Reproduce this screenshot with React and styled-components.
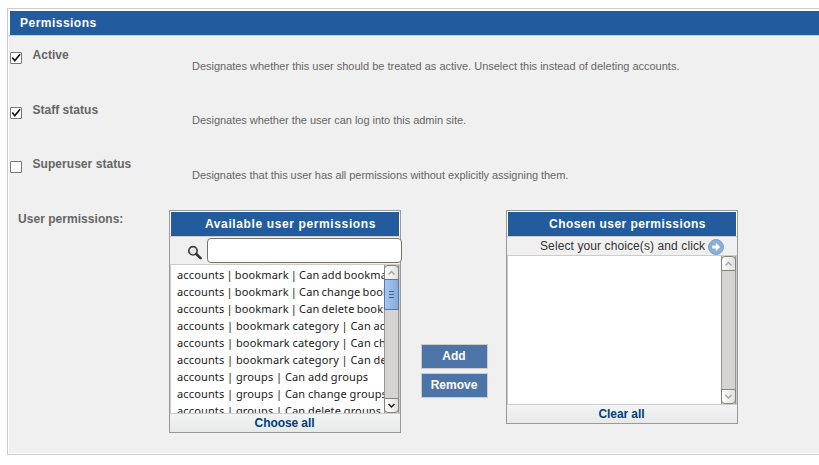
import React from "react";
import styled, { createGlobalStyle, css } from "styled-components";

const GlobalStyle = createGlobalStyle`
  * { box-sizing: border-box; }
  body {
    margin: 0;
    background: #fff;
    color: #666;
    font-family: "Liberation Sans", Arial, sans-serif;
    font-size: 12px;
    overflow: hidden;
  }
`;

const Page = styled.main`
  width: 819px;
  height: 465px;
  padding: 8px 0 0 7px;
  overflow: hidden;
`;

const Fieldset = styled.section`
  height: 447px;
  border: 1px solid #ccc;
  border-right: 0;
  padding: 1px 0 1px 1px;
  background: #fff;
`;

const FieldsetBody = styled.div`
  height: 443px;
  background: #f0f0f0;
`;

const blueBar = css`
  background: #225c9f;
  border: solid #fff;
  border-width: 1px 1px 0;
  color: #fff;
  font-weight: bold;
  white-space: nowrap;
`;

const FieldsetTitle = styled.h2`
  ${blueBar}
  height: 25px;
  margin: 0 0 1px;
  padding-left: 10px;
  border-right: 0;
  font-size: 12px;
  line-height: 25px;
  letter-spacing: 0.48px;
  box-shadow: 0 1px #ccc;
`;

const CheckRow = styled.div`
  display: grid;
  grid-template-columns: 23.5px 159.5px 1fr;
  height: ${(p) => p.$height}px;
  padding-top: ${(p) => p.$pad}px;
`;

const CheckBox = styled.span`
  display: block;
  width: 12px;
  height: 12px;
  margin: 4px 0 0 1px;
  border: 1px solid #7b776f;
  border-radius: 1px;
  background: #fff;
  svg { display: block; width: 10px; height: 10px; }
`;

const Label = styled.label`
  font-size: 12px;
  line-height: 14px;
  font-weight: bold;
  letter-spacing: ${(p) => p.$spacing}px;
  white-space: nowrap;
`;

const Help = styled.p`
  margin: ${(p) => p.$top}px 0 0;
  font-size: 11px;
  line-height: 13px;
  letter-spacing: ${(p) => p.$spacing}px;
  white-space: nowrap;
`;

const PermissionsRow = styled.div`
  display: grid;
  grid-template-columns: 151px 232px 105px 232px;
  padding: 11px 0 0 9px;
  align-items: start;
  & > label { padding-top: 2px; }
`;

const Selector = styled.div`
  width: 232px;
  border: 1px solid #999;
  background: #f0f0f0;
`;

const SelectorTitle = styled.h3`
  ${blueBar}
  height: 25px;
  margin: 0;
  padding-left: 11px;
  line-height: 25px;
  font-size: 12px;
  text-align: center;
  letter-spacing: ${(p) => p.$spacing}px;
`;

const ToolRow = styled.div`
  display: flex;
  height: ${(p) => p.$height}px;
  border: solid #ccc;
  border-width: 1px 0;
  background: #f0f0f0;
`;

const FilterField = styled.div`
  flex: none;
  width: 195px;
  height: 25px;
  margin: 1px 0 0 4px;
  border: 1px solid #77736b;
  border-radius: 4px;
  background: #fff;
  position: relative;
`;

const SearchIcon = styled.svg`
  flex: none;
  width: 16px;
  height: 16px;
  margin: 8px 0 0 17px;
`;

const Hint = styled.span`
  margin-left: 33px;
  color: #333;
  font-size: 12px;
  line-height: 18px;
  letter-spacing: 0.1px;
  white-space: pre;
`;

const ArrowIcon = styled.svg`
  flex: none;
  width: 16px;
  height: 16px;
  margin: 2px 0 0 3px;
`;

const ListBox = styled.div`
  display: flex;
  height: 148px;
  border: solid #ccc;
  border-width: 0 1px;
  background: #fff;
  overflow: hidden;
`;

const Options = styled.ul`
  flex: 1;
  min-width: 0;
  margin: 0;
  padding: 1px 0 0 6px;
  list-style: none;
  overflow: hidden;
`;

const Option = styled.li`
  height: 17px;
  color: #1a1a1a;
  font-family: "Noto Sans", "Open Sans", sans-serif;
  font-size: 11px;
  line-height: 17px;
  letter-spacing: 0.14px;
  word-spacing: ${(p) => p.$wordSpacing}px;
  white-space: nowrap;
`;

const ScrollTrack = styled.div`
  display: flex;
  flex-direction: column;
  flex: none;
  width: 15px;
  border: solid #999490;
  border-width: 0 1px;
  background: #d5d4d2;
`;

const ScrollButton = styled.div`
  flex: none;
  width: 15px;
  height: 15px;
  margin: 0 -1px;
  border: 1px solid #87837d;
  border-radius: ${(p) => (p.$end ? "0 0 4px 4px" : "4px 4px 0 0")};
  background: linear-gradient(90deg, #fff, #e0dfdd);
  color: ${(p) => (p.$active ? "#222" : "#aaa7a1")};
  margin-top: ${(p) => (p.$end ? "auto" : 0)};
  svg { display: block; width: 13px; height: 13px; }
`;

const Thumb = styled.div`
  display: flex;
  flex-direction: column;
  align-items: center;
  justify-content: center;
  gap: 2px;
  height: 31px;
  margin: -1px -1px 0;
  border: 1px solid #5079b1;
  background: linear-gradient(90deg, #a9c6ed, #85abdc);
  span { width: 5px; height: 1px; background: #3c659c; }
`;

const SelectorFooter = styled.div`
  height: 19px;
  padding-right: 1px;
  border-top: 1px solid #ccc;
  background: linear-gradient(#f3f4f4, #e7e9e8);
  color: #003f7d;
  font-weight: bold;
  line-height: 18px;
  text-align: center;
  letter-spacing: -0.08px;
`;

const Actions = styled.div`
  display: flex;
  flex-direction: column;
  gap: 4px;
  padding: 134px 18px 0 20px;
`;

const ActionButton = styled.button`
  width: 67px;
  height: 25px;
  padding: 0 1px 1px 0;
  border: 1px solid #ccc;
  background: #4c74a9;
  color: #fff;
  font: bold 12px/14px "Liberation Sans", Arial, sans-serif;
  letter-spacing: ${(p) => p.$spacing}px;
`;

const checks = [
  { label: "Active", spacing: 0.02, help: "Designates whether this user should be treated as active. Unselect this instead of deleting accounts.", helpSpacing: -0.005, checked: true, height: 54, pad: 12, helpTop: 12 },
  { label: "Staff status", spacing: 0.02, help: "Designates whether the user can log into this admin site.", helpSpacing: -0.03, checked: true, height: 55, pad: 13, helpTop: 11 },
  { label: "Superuser status", spacing: 0.05, help: "Designates that this user has all permissions without explicitly assigning them.", helpSpacing: -0.05, checked: false, height: 54, pad: 12, helpTop: 12 },
];

const options = [
  { name: "accounts | bookmark | Can add bookmark", gap: -0.9 },
  { name: "accounts | bookmark | Can change bookmark", gap: -0.9 },
  { name: "accounts | bookmark | Can delete bookmark", gap: -0.9 },
  { name: "accounts | bookmark category | Can add bookmark category", gap: -0.3 },
  { name: "accounts | bookmark category | Can change bookmark category", gap: -0.3 },
  { name: "accounts | bookmark category | Can delete bookmark category", gap: -0.3 },
  { name: "accounts | groups | Can add groups", gap: -0.3 },
  { name: "accounts | groups | Can change groups", gap: -0.3 },
  { name: "accounts | groups | Can delete groups", gap: -0.3 },
];

function Chevron({ down }) {
  return (
    <svg viewBox="0 0 13 13">
      <path d={down ? "M3.5 5 6.5 8 9.5 5" : "M3.5 8.5 6.5 5.5 9.5 8.5"} fill="none" stroke="currentColor" strokeWidth={1.5} />
    </svg>
  );
}

function ScrollBar({ scrollable }) {
  return (
    <ScrollTrack>
      <ScrollButton><Chevron /></ScrollButton>
      {scrollable && <Thumb><span /><span /><span /></Thumb>}
      <ScrollButton $end $active={scrollable}><Chevron down /></ScrollButton>
    </ScrollTrack>
  );
}

export default function App() {
  return (
    <Page>
      <GlobalStyle />
      <Fieldset>
        <FieldsetBody>
          <FieldsetTitle>Permissions</FieldsetTitle>
          {checks.map((c) => (
            <CheckRow key={c.label} $height={c.height} $pad={c.pad}>
              <CheckBox role="checkbox" aria-checked={c.checked}>
                {c.checked && (
                  <svg viewBox="0 0 10 10">
                    <path d="M1.3 4.5 3.8 7.7 9 1.2" fill="none" stroke="#111" strokeWidth="1.7" />
                  </svg>
                )}
              </CheckBox>
              <Label $spacing={c.spacing}>{c.label}</Label>
              <Help $top={c.helpTop} $spacing={c.helpSpacing}>{c.help}</Help>
            </CheckRow>
          ))}
          <PermissionsRow>
            <Label $spacing={0.04}>User permissions:</Label>
            <Selector>
              <SelectorTitle $spacing={0.62}>Available user permissions</SelectorTitle>
              <ToolRow $height={29}>
                <SearchIcon viewBox="0 0 16 16">
                  <circle cx="6" cy="5.8" r="4.2" fill="#e5e5e5" stroke="#444" strokeWidth="1.7" />
                  <path d="M3.8 5.5A2.4 2.4 0 0 1 6 3.5" fill="none" stroke="#fff" strokeWidth="1.2" />
                  <path d="m9.3 9 4.2 4.2" fill="none" stroke="#333" strokeWidth="2.6" strokeLinecap="round" />
                </SearchIcon>
                <FilterField role="textbox" />
              </ToolRow>
              <ListBox>
                <Options>{options.map((o) => <Option key={o.name} $wordSpacing={o.gap}>{o.name}</Option>)}</Options>
                <ScrollBar scrollable />
              </ListBox>
              <SelectorFooter>Choose all</SelectorFooter>
            </Selector>
            <Actions>
              <ActionButton $spacing={0.1}>Add</ActionButton>
              <ActionButton $spacing={0}>Remove</ActionButton>
            </Actions>
            <Selector>
              <SelectorTitle $spacing={0.44}>Chosen user permissions</SelectorTitle>
              <ToolRow $height={20}>
                <Hint>Select your choice(s) and click</Hint>
                <ArrowIcon viewBox="0 0 16 16">
                  <circle cx="8" cy="8" r="7.5" fill="#8bb0d5" stroke="#7aa2cb" />
                  <path d="M4.3 6.5h3.5V3.7L12.2 8l-4.4 4.3V9.5H4.3z" fill="#fff" />
                </ArrowIcon>
              </ToolRow>
              <ListBox>
                <Options />
                <ScrollBar />
              </ListBox>
              <SelectorFooter>Clear all</SelectorFooter>
            </Selector>
          </PermissionsRow>
        </FieldsetBody>
      </Fieldset>
    </Page>
  );
}
